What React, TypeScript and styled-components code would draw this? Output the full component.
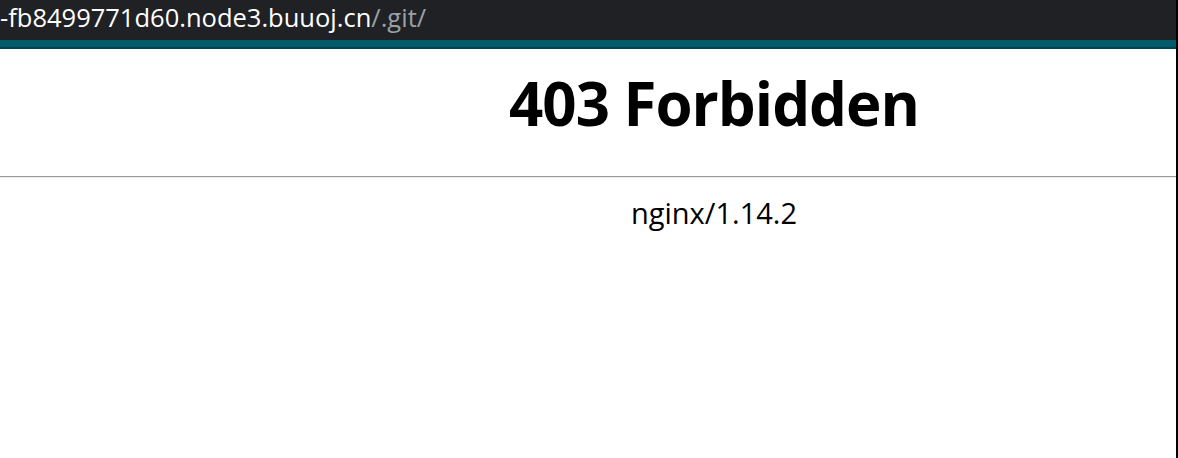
import React from "react";
import styled, { createGlobalStyle } from "styled-components";

const Global = createGlobalStyle`
  html, body { margin: 0; padding: 0; background: #ffffff; }
  body { font-family: "Open Sans", "Noto Sans", sans-serif; color: #000; }
`;

const Frame = styled.div`
  width: 1178px;
  height: 458px;
  box-sizing: border-box;
  border-right: 2px solid #000;
  display: flex;
  flex-direction: column;
  overflow: hidden;
  background: #fff;
`;

const AddressBar = styled.div`
  height: 40px;
  flex: none;
  background: #202124;
  display: flex;
  align-items: flex-start;
  overflow: hidden;
  white-space: nowrap;
`;

const Url = styled.span`
  font-family: "Open Sans", sans-serif;
  font-size: 25.5px;
  line-height: 34px;
  color: #ffffff;
`;

const UrlPath = styled.span`
  color: #9aa0a6;
`;

const Stripe = styled.div`
  height: 7px;
  flex: none;
  background: #035a6b;
  border-bottom: 2px solid #01434f;
`;

const Viewport = styled.div`
  flex: 1;
  overflow: hidden;
`;

const Page = styled.div`
  width: 1428px;
  display: flex;
  flex-direction: column;
  align-items: stretch;
`;

const Title = styled.h1`
  margin: 14px 0 0;
  text-align: center;
  font-family: "Open Sans", sans-serif;
  font-weight: 700;
  font-size: 60px;
  line-height: 80px;
  letter-spacing: -1px;
`;

const Rule = styled.hr`
  margin: 33px 0 0;
  height: 0;
  border: 0;
  border-top: 1px solid #9a9a9a;
  border-bottom: 1px solid #eeeeee;
`;

const Server = styled.div`
  margin-top: 19px;
  text-align: center;
  font-family: "Open Sans", sans-serif;
  font-size: 29px;
  line-height: 32px;
`;

export default function App() {
  return (
    <>
      <Global />
      <Frame>
        <AddressBar>
          <Url>
            -fb8499771d60.node3.buuoj.cn<UrlPath>/.git/</UrlPath>
          </Url>
        </AddressBar>
        <Stripe />
        <Viewport>
          <Page>
            <Title>403 Forbidden</Title>
            <Rule />
            <Server>nginx/1.14.2</Server>
          </Page>
        </Viewport>
      </Frame>
    </>
  );
}
